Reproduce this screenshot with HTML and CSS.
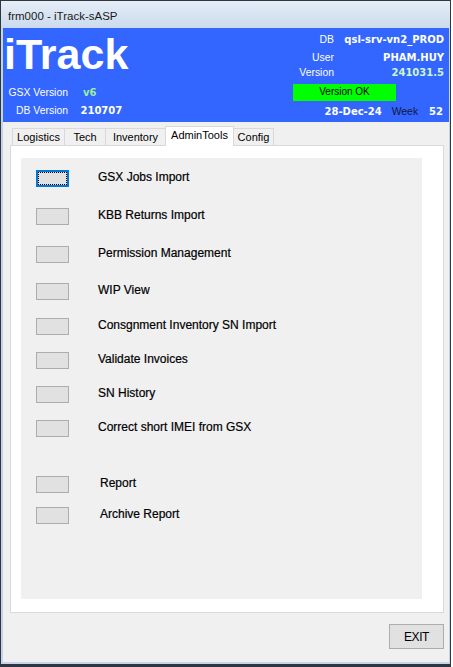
FILE: index.html
```html
<!DOCTYPE html>
<html lang="en">
<head>
<meta charset="utf-8">
<title>frm000 - iTrack-sASP</title>
<link rel="stylesheet" href="styles.css">
</head>
<body>
<div class="window">
  <div class="titlebar"><span class="title">frm000 - iTrack-sASP</span></div>
  <div class="client">
    <header class="banner">
      <div class="banner-left">
        <div class="logo">iTrack</div>
        <div class="kv-row first">
          <span class="kv-lbl">GSX Version</span>
          <span class="kv-val v6">v6</span>
        </div>
        <div class="kv-row">
          <span class="kv-lbl">DB Version</span>
          <span class="kv-val dbv">210707</span>
        </div>
      </div>
      <div class="banner-right">
        <span class="r-lbl">DB</span><span class="r-val">qsl-srv-vn2_PROD</span>
        <span class="r-lbl">User</span><span class="r-val">PHAM.HUY</span>
        <span class="r-lbl">Version</span><span class="r-val ver">241031.5</span>
        <div class="ok">Version OK</div>
        <div class="date-row">
          <span class="r-val">28-Dec-24</span>
          <span class="week">Week</span>
          <span class="r-val wk">52</span>
        </div>
      </div>
    </header>

    <nav class="tabs">
      <div class="tab t-log">Logistics</div>
      <div class="tab t-tech">Tech</div>
      <div class="tab t-inv">Inventory</div>
      <div class="tab t-admin selected">AdminTools</div>
      <div class="tab t-cfg">Config</div>
    </nav>

    <section class="tabpage">
      <div class="panel">
        <div class="row"><span class="btn focus"></span><span class="lbl">GSX Jobs Import</span></div>
        <div class="row g21"><span class="btn"></span><span class="lbl">KBB Returns Import</span></div>
        <div class="row g21"><span class="btn"></span><span class="lbl">Permission Management</span></div>
        <div class="row g20"><span class="btn"></span><span class="lbl">WIP View</span></div>
        <div class="row g18"><span class="btn"></span><span class="lbl">Consgnment Inventory SN Import</span></div>
        <div class="row g17"><span class="btn"></span><span class="lbl">Validate Invoices</span></div>
        <div class="row g17"><span class="btn"></span><span class="lbl">SN History</span></div>
        <div class="row g17"><span class="btn"></span><span class="lbl">Correct short IMEI from GSX</span></div>
        <div class="row g39"><span class="btn"></span><span class="lbl shift">Report</span></div>
        <div class="row g14"><span class="btn"></span><span class="lbl shift">Archive Report</span></div>
      </div>
    </section>

    <div class="footer">
      <button class="exit" type="button">EXIT</button>
    </div>
  </div>
</div>
</body>
</html>
```
FILE: styles.css
```css
* { box-sizing: border-box; }

html, body {
  margin: 0;
  padding: 0;
  background: #ffffff;
}

body {
  width: 453px;
  height: 667px;
  overflow: hidden;
  font-family: "Liberation Sans", Arial, sans-serif;
  color: #000;
}

.window {
  width: 451px;
  height: 667px;
  border: 1px solid #2f3640;
  border-bottom-width: 3px;
  background: #c3d5ec;
  display: flex;
  flex-direction: column;
  padding: 0 1px 2px 2px;
}

.titlebar {
  height: 27px;
  margin: 0 -1px 0 -2px;
  padding: 9px 0 0 7px;
  background: linear-gradient(#e6eef8, #cbdaed);
  font-size: 11.5px;
  line-height: 13px;
  color: #1b1b1b;
}

.client {
  flex: 1;
  background: #f0f0f0;
  display: flex;
  flex-direction: column;
}

/* ---------- banner ---------- */
.banner {
  height: 94px;
  background: #3366ff;
  color: #ffffff;
  display: flex;
  justify-content: space-between;
}

.banner-left {
  padding-top: 5px;
}

.logo {
  font-weight: bold;
  font-size: 43px;
  line-height: 43px;
  margin-left: 1px;
}

.kv-row {
  display: flex;
  height: 18px;
  line-height: 18px;
  font-size: 10.4px;
  white-space: nowrap;
}

.kv-row.first { margin-top: 8px; }

.kv-lbl {
  width: 65px;
  text-align: right;
}

.kv-val {
  font-family: "DejaVu Sans", sans-serif;
  font-weight: bold;
  font-size: 10px;
}

.v6 { margin-left: 15px; color: #9cf09c; }
.dbv { margin-left: 12.5px; }

.banner-right {
  width: 156px;
  padding: 3px 5px 0 0;
  display: grid;
  grid-template-columns: 41px 110px;
  grid-template-rows: 18px 15px 20px 19px 17px;
  align-content: start;
  font-size: 10.4px;
  line-height: 17px;
  white-space: nowrap;
}

.r-lbl { text-align: right; }

.r-val {
  text-align: right;
  font-family: "DejaVu Sans", sans-serif;
  font-weight: bold;
  font-size: 10px;
}

.ver { color: #ccf5cc; }

.ok {
  grid-column: 1 / 3;
  width: 103px;
  height: 17px;
  background: #00ff00;
  color: #000;
  text-align: center;
  font-size: 10px;
  line-height: 15px;
}

.date-row {
  grid-column: 1 / 3;
  display: flex;
  justify-content: flex-end;
}

.week {
  margin-left: 10px;
  color: #10183a;
}

.wk {
  margin-left: 11px;
  margin-right: 1px;
}

/* ---------- tabs ---------- */
.tabs {
  display: flex;
  align-items: flex-end;
  height: 19px;
  margin: 4px 0 0 9px;
}

.tab {
  height: 17px;
  border: 1px solid #d9d9d9;
  border-bottom: none;
  background: #f0f0f0;
  font-size: 11px;
  line-height: 16px;
  text-align: center;
  margin-left: -1px;
  white-space: nowrap;
}

.t-log { width: 53px; margin-left: 0; }
.t-tech { width: 42px; }
.t-inv { width: 61px; }
.t-admin { width: 69px; }
.t-cfg { width: 41px; }

.tab.selected {
  height: 20px;
  margin-bottom: -1px;
  background: #ffffff;
  position: relative;
  z-index: 1;
}

.tabpage {
  margin-left: 7px;
  width: 434px;
  height: 468px;
  border: 1px solid #d9d9d9;
  background: #ffffff;
  padding: 12px 0 0 10px;
}

.panel {
  width: 401px;
  height: 441px;
  background: #f0f0f0;
  padding-top: 12px;
  display: flex;
  flex-direction: column;
}

.row {
  display: flex;
  align-items: flex-start;
  height: 17px;
}

.g21 { margin-top: 21px; }
.g20 { margin-top: 20px; }
.g18 { margin-top: 18px; }
.g17 { margin-top: 17px; }
.g39 { margin-top: 39px; }
.g14 { margin-top: 14px; }

.btn {
  width: 33px;
  height: 17px;
  margin-left: 15px;
  border: 1px solid #adadad;
  background: #e1e1e1;
  flex: none;
}

.btn.focus {
  border-color: #0078d7;
  box-shadow: inset 0 0 0 1px #0078d7;
  outline: 1px dotted #000;
  outline-offset: -3px;
}

.lbl {
  margin-left: 29px;
  font-size: 12px;
  line-height: 15px;
  white-space: nowrap;
  -webkit-text-stroke: 0.2px #000;
}

.lbl.shift { margin-left: 31px; }

/* ---------- footer ---------- */
.footer {
  display: flex;
  justify-content: flex-end;
  padding: 11px 5px 0 0;
}

.exit {
  width: 55px;
  height: 25px;
  border: 1px solid #adadad;
  background: #e1e1e1;
  font-family: "Liberation Sans", Arial, sans-serif;
  font-size: 12px;
  letter-spacing: -0.4px;
  color: #000;
  padding: 0;
  margin: 0;
}
```
